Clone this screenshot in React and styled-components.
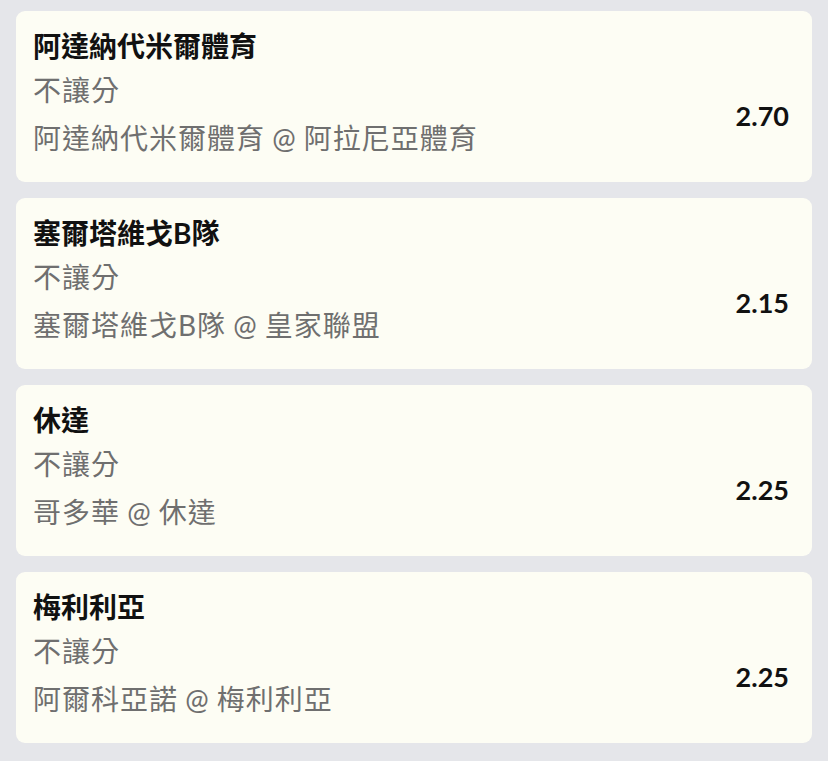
import React from "react";
import styled, { createGlobalStyle } from "styled-components";

const GlobalStyle = createGlobalStyle`
  html, body {
    margin: 0;
    padding: 0;
    background: #e5e6ea;
  }
  body {
    font-family: Lato, "Noto Sans CJK TC", sans-serif;
  }
`;

const List = styled.div`
  display: flex;
  flex-direction: column;
  gap: 16px;
  padding: 11px 16px 19px;
`;

const Card = styled.div`
  display: grid;
  grid-template-columns: 1fr auto;
  grid-template-rows: auto auto auto;
  background: #fdfdf4;
  border-radius: 9px;
  padding: 15px 23px 24px 17px;
`;

const Title = styled.div`
  grid-column: 1;
  font-size: 28px;
  line-height: 40px;
  font-weight: 700;
  color: #111;
`;

const Sub = styled.div`
  grid-column: 1;
  font-size: 28px;
  line-height: 40px;
  letter-spacing: 1px;
  word-spacing: -1px;
  color: #6f6f6f;
  margin-top: ${(p) => p.$gap}px;
`;

const Price = styled.div`
  grid-column: 2;
  grid-row: 2 / 4;
  align-self: center;
  margin-top: 7px;
  font-size: 27px;
  font-weight: 700;
  color: #111;
`;

const bets = [
  { pick: "阿達納代米爾體育", match: "阿達納代米爾體育 @ 阿拉尼亞體育", odds: "2.70" },
  { pick: "塞爾塔維戈B隊", match: "塞爾塔維戈B隊 @ 皇家聯盟", odds: "2.15" },
  { pick: "休達", match: "哥多華 @ 休達", odds: "2.25" },
  { pick: "梅利利亞", match: "阿爾科亞諾 @ 梅利利亞", odds: "2.25" },
];

export default function App() {
  return (
    <>
      <GlobalStyle />
      <List>
        {bets.map((bet, i) => (
          <Card key={i}>
            <Title>{bet.pick}</Title>
            <Sub $gap={4}>不讓分</Sub>
            <Sub $gap={8}>{bet.match}</Sub>
            <Price>{bet.odds}</Price>
          </Card>
        ))}
      </List>
    </>
  );
}
